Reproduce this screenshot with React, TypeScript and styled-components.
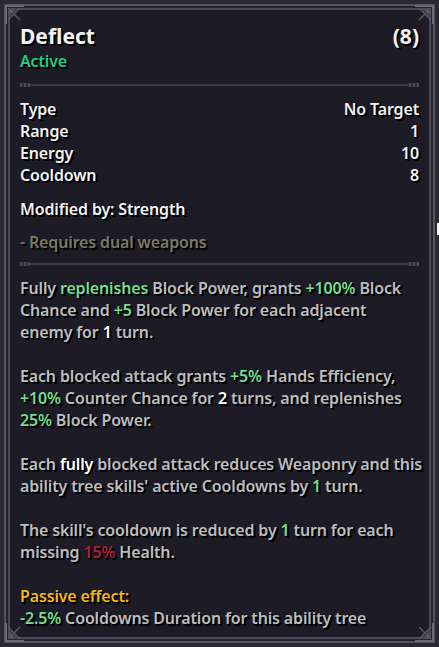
import React from "react";
import styled, { createGlobalStyle } from "styled-components";

const GlobalStyle = createGlobalStyle`
  html, body {
    margin: 0;
    padding: 0;
    background: #2a2931;
  }
  body {
    font-family: "Noto Sans", "DejaVu Sans", sans-serif;
    -webkit-font-smoothing: none;
  }
`;

const Screen = styled.div`
  position: relative;
  width: 439px;
  height: 647px;
  padding: 4px;
  box-sizing: border-box;
  overflow: hidden;
`;

const Panel = styled.div`
  position: relative;
  height: 100%;
  box-sizing: border-box;
  background: #1c1b26;
  border: 2px solid #55545f;
  box-shadow: inset 0 0 0 2px #24232d, inset 0 0 0 4px #4a4956;
  padding: 16px 14px 0 14px;
  color: #f2f2f2;
  text-shadow: 1px 1px 0 #000, 2px 2px 0 #000;
  letter-spacing: -0.15px;
`;

const Corner = styled.svg<{ $pos: "tl" | "tr" | "bl" | "br" }>`
  position: absolute;
  width: 22px;
  height: 22px;
  ${(p) => (p.$pos[0] === "t" ? "top: -2px;" : "bottom: -2px;")}
  ${(p) => (p.$pos[1] === "l" ? "left: -2px;" : "right: -2px;")}
  transform: ${(p) =>
    ({ tl: "none", tr: "scaleX(-1)", bl: "scaleY(-1)", br: "scale(-1,-1)" })[
      p.$pos
    ]};
`;

const TitleRow = styled.div`
  display: flex;
  justify-content: space-between;
  align-items: baseline;
  font-size: 21px;
  font-weight: 700;
  line-height: 28px;
  letter-spacing: 0;
`;

const Subtitle = styled.div`
  color: #1fce8b;
  font-size: 16px;
  font-weight: 600;
  line-height: 22px;
`;

const Separator = styled.div<{ $top: number; $bottom: number }>`
  position: relative;
  height: 2px;
  margin: ${(p) => p.$top}px 0 ${(p) => p.$bottom}px;
  background: #3a3946;
  &::before,
  &::after {
    content: "";
    position: absolute;
    top: -1px;
    width: 10px;
    height: 4px;
    background: repeating-linear-gradient(
      90deg,
      #4c4b58 0 2px,
      #2e2d38 2px 4px
    );
  }
  &::before {
    left: 0;
  }
  &::after {
    right: 0;
  }
`;

const StatTable = styled.div`
  display: grid;
  grid-template-columns: 1fr auto;
  font-size: 16px;
  font-weight: 600;
  line-height: 22px;
`;

const StatValue = styled.div`
  text-align: right;
`;

const Line = styled.div<{ $color?: string; $top?: number }>`
  font-size: 16px;
  font-weight: 600;
  line-height: 22px;
  color: ${(p) => p.$color ?? "#f2f2f2"};
  margin-top: ${(p) => p.$top ?? 0}px;
`;

const Description = styled.div`
  display: flex;
  flex-direction: column;
  gap: 22px;
  font-size: 16px;
  font-weight: 600;
  line-height: 22px;
  color: #bdbdbd;
  white-space: nowrap;
`;

const Hl = styled.span<{ $c: "green" | "white" | "red" | "yellow" }>`
  color: ${(p) =>
    ({ green: "#74df8c", white: "#ffffff", red: "#b01f3c", yellow: "#f6b80b" })[
      p.$c
    ]};
`;

const EdgeTick = styled.div`
  position: absolute;
  right: 0;
  top: 223px;
  width: 2px;
  height: 12px;
  background: #f2f2f2;
`;

const CornerArt = () => (
  <>
    <path d="M2 2H20M2 2V20" stroke="#6a6976" strokeWidth="2" />
    <path d="M4 4L16 16M4 10L10 4M4 16L16 4" stroke="#585764" strokeWidth="1.5" />
    <path d="M6 7H12M7 6V12" stroke="#6a6976" strokeWidth="1" />
  </>
);

const stats: [string, string][] = [
  ["Type", "No Target"],
  ["Range", "1"],
  ["Energy", "10"],
  ["Cooldown", "8"],
];

export default function App() {
  return (
    <>
      <GlobalStyle />
      <Screen>
        <Panel>
          {(["tl", "tr", "bl", "br"] as const).map((p) => (
            <Corner key={p} $pos={p} viewBox="0 0 22 22">
              <CornerArt />
            </Corner>
          ))}
          <TitleRow>
            <span>Deflect</span>
            <span>(8)</span>
          </TitleRow>
          <Subtitle>Active</Subtitle>
          <Separator $top={12} $bottom={12} />
          <StatTable>
            {stats.map(([k, v]) => (
              <React.Fragment key={k}>
                <div>{k}</div>
                <StatValue>{v}</StatValue>
              </React.Fragment>
            ))}
          </StatTable>
          <Line $top={12}>Modified by: Strength</Line>
          <Line $top={11} $color="#7b7a69">
            - Requires dual weapons
          </Line>
          <Separator $top={10} $bottom={12} />
          <Description>
            <div>
              Fully <Hl $c="green">replenishes</Hl> Block Power, grants{" "}
              <Hl $c="green">+100%</Hl> Block
              <br />
              Chance and <Hl $c="green">+5</Hl> Block Power for each adjacent
              <br />
              enemy for <Hl $c="white">1</Hl> turn.
            </div>
            <div>
              Each blocked attack grants <Hl $c="green">+5%</Hl> Hands
              Efficiency,
              <br />
              <Hl $c="green">+10%</Hl> Counter Chance for{" "}
              <Hl $c="white">2</Hl> turns, and replenishes
              <br />
              <Hl $c="green">25%</Hl> Block Power.
            </div>
            <div>
              Each <Hl $c="white">fully</Hl> blocked attack reduces Weaponry
              and this
              <br />
              ability tree skills' active Cooldowns by{" "}
              <Hl $c="green">1</Hl> turn.
            </div>
            <div>
              The skill's cooldown is reduced by <Hl $c="green">1</Hl> turn for
              each
              <br />
              missing <Hl $c="red">15%</Hl> Health.
            </div>
            <div>
              <Hl $c="yellow">Passive effect:</Hl>
              <br />
              <Hl $c="green">-2.5%</Hl> Cooldowns Duration for this ability
              tree
            </div>
          </Description>
        </Panel>
        <EdgeTick />
      </Screen>
    </>
  );
}
